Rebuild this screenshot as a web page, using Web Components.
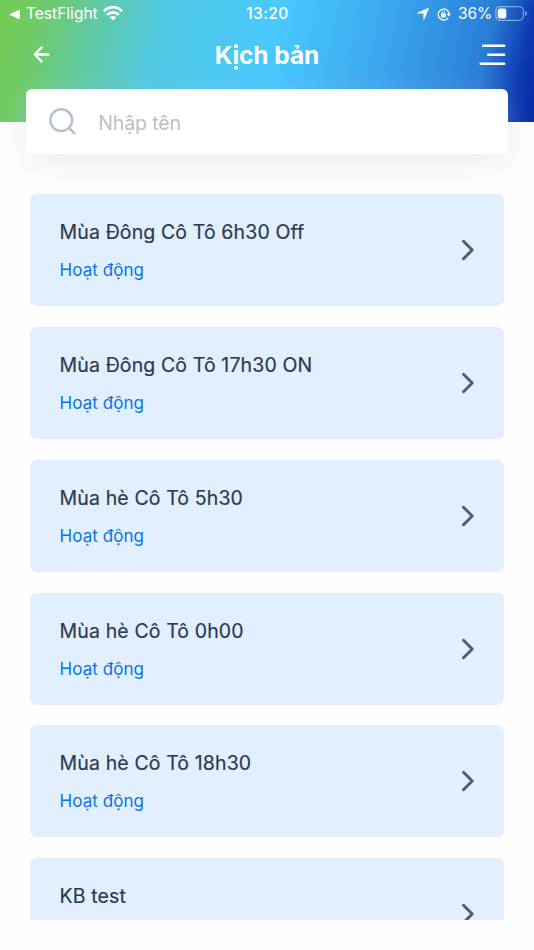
<!DOCTYPE html>
<html lang="vi">
<head>
<meta charset="utf-8">
<title>Kịch bản</title>
<style>
html,body{margin:0;height:100%;background:#fefefe}
body{font-family:Inter,"Liberation Sans",sans-serif;overflow:hidden}
</style>
</head>
<body>
<scenario-app></scenario-app>
<script>
const define = (name, html, setup) => customElements.define(name, class extends HTMLElement {
  constructor() {
    super();
    this.attachShadow({ mode: 'open' }).innerHTML = html;
  }
  connectedCallback() { if (setup) setup(this, this.shadowRoot); }
});

define('status-bar', `
<style>
:host{display:grid;grid-template-columns:1fr auto 1fr;align-items:center;height:28px;padding:0 7px 0 9px;color:#fff;font-size:15.5px;line-height:28px;white-space:nowrap}
div{display:flex;align-items:center}
svg{display:block;flex:none}
.app{margin-left:6px;letter-spacing:.02px}
.wifi{margin-left:5px;margin-top:-2px}
.time{font-weight:500;letter-spacing:.4px;margin-right:1px}
.right{justify-content:flex-end}
.pct{margin-left:7px;letter-spacing:-.15px}
.bat{margin-left:3px;margin-top:-1px}
</style>
<div><svg width="11" height="11" viewBox="0 0 11 11"><path d="M1 5.1 9.8.9q1-.4 1 .6v7.8q0 1-1 .6L1 6Q0 5.5 1 5.1Z" fill="#fff"/></svg>
<span class="app">TestFlight</span>
<svg class="wifi" width="20" height="15" viewBox="0 0 20 15"><g fill="none" stroke="#fff" stroke-width="2.7"><path d="M.9 5.3C6-.1 14-.1 19.1 5.3"/><path d="M4.2 8.8c3.3-3.3 8.3-3.3 11.6 0"/></g><path d="M6.9 11.3q3.1-2.6 6.2 0L10 14.5Z" fill="#fff"/></svg></div>
<div class="time">13:20</div>
<div class="right">
<svg width="12" height="12" viewBox="0 0 12 12"><path d="M11.2.1q.9-.3.6.6L7.2 11.5q-.5.8-.8-.1V5.6H.6q-.9-.3-.1-.8Z" fill="#fff"/></svg>
<svg style="margin-left:8px" width="14" height="13" viewBox="0 0 14 13"><path d="M11.2 9.8A5.5 5.5 0 1 1 11.6 4" fill="none" stroke="#fff" stroke-width="1.3"/><path d="M9.7 5.7h4.1l-2 2.9Z" fill="#fff"/><path d="M11.5 3.8l.4 2.2" stroke="#fff" stroke-width="1.3"/><rect x="4" y="5.6" width="4.8" height="3.8" rx=".5" fill="#fff"/><path d="M5 6V4.6a1.4 1.4 0 0 1 2.8 0V6" fill="none" stroke="#fff" stroke-width=".9"/></svg>
<span class="pct">36%</span>
<svg class="bat" width="32" height="15" viewBox="0 0 32 15"><rect x=".9" y=".7" width="27.4" height="13.6" rx="4" fill="none" stroke="#fff" stroke-opacity=".45" stroke-width="1.3"/><rect x="2.8" y="2.5" width="8.5" height="10" rx="2" fill="#fff"/><path d="M30 5q2 .6 2 2.5t-2 2.5Z" fill="#fff" fill-opacity=".5"/></svg>
</div>`);

define('nav-bar', `
<style>
:host{display:grid;grid-template-columns:1fr auto 1fr;align-items:center;height:54px;padding:0 28px 0 33px;color:#fff}
h1{margin:0 5px 0 0;font-size:24.5px;line-height:54px;font-weight:700;letter-spacing:-.05px}
svg{display:block}
.back{margin-top:-1px}
.menu{justify-self:end}
</style>
<svg class="back" width="17" height="17" viewBox="0 0 17 17" fill="none" stroke="#fff" stroke-width="2.4" stroke-linecap="round" stroke-linejoin="round"><path d="M8.6 1.4 1.8 8.5l6.8 7M2 8.5h13.3"/></svg>
<h1><slot></slot></h1>
<svg class="menu" width="27" height="22" viewBox="0 0 27 22" stroke="#fff" stroke-width="2.6" stroke-linecap="round"><path d="M4.3 1.7h20.8M9.3 10.7h15.8M1.7 19.7h23.4"/></svg>`);

define('search-field', `
<style>
:host{display:flex;align-items:center;box-sizing:border-box;height:64.5px;padding-left:22.5px;border-radius:6px;background:#fff;box-shadow:0 10px 34px rgba(195,203,225,.32);color:#b9c0c9;font-size:19.5px}
svg{display:block;margin-right:21.7px;margin-top:2px}
span{letter-spacing:-.13px;line-height:28px;margin-top:4px}
</style>
<svg width="28" height="28" viewBox="0 0 28 28" fill="none" stroke="#b4c3d4" stroke-width="2.5" stroke-linecap="round"><circle cx="12.2" cy="12.2" r="10.9"/><path d="m20 20 5.4 5.4"/></svg>
<span><slot></slot></span>`);

define('scenario-card', `
<style>
:host{display:flex;align-items:center;justify-content:space-between;box-sizing:border-box;flex:none;height:112px;padding:0 28.7px 0 29.6px;border-radius:7px;background:#e1efff}
.title{color:#2d3b50;font-size:19.5px;line-height:28px;letter-spacing:.12px;-webkit-text-stroke:.2px #2d3b50}
.state{color:#0a74e2;font-size:17px;line-height:24px;height:24px;margin-top:12px;letter-spacing:.06px}
svg{display:block}
</style>
<div><div class="title"><slot></slot></div><div class="state"></div></div>
<svg width="14" height="22" viewBox="0 0 14 22" fill="none" stroke="#505e6e" stroke-width="3" stroke-linecap="round" stroke-linejoin="round"><path d="m2.5 2.3 8.7 8.7-8.7 8.7"/></svg>`,
(el, root) => { root.querySelector('.state').textContent = el.getAttribute('state') || ''; });

define('scenario-app', `
<style>
:host{display:flex;flex-direction:column;height:920px;overflow:hidden}
header{flex:none;height:121.5px;background:linear-gradient(102deg,#74cc52 0%,#70cb68 7%,#62c9a0 17%,#50c9e4 30%,#48c8ff 51%,#3dabf0 68%,#2d87dc 85%,#2a7bd4 89%,#0b39b0 96%,#0428a4 100%)}
search-field{flex:none;margin:-32.3px 26px 0;position:relative}
main{display:flex;flex-direction:column;gap:20.9px;margin-top:40.2px;padding:0 30px;flex:1;min-height:0;overflow:hidden}
</style>
<header><status-bar></status-bar><nav-bar>Kịch bản</nav-bar></header>
<search-field>Nhập tên</search-field>
<main>
<scenario-card state="Hoạt động">Mùa Đông Cô Tô 6h30 Off</scenario-card>
<scenario-card state="Hoạt động">Mùa Đông Cô Tô 17h30 ON</scenario-card>
<scenario-card state="Hoạt động">Mùa hè Cô Tô 5h30</scenario-card>
<scenario-card state="Hoạt động">Mùa hè Cô Tô 0h00</scenario-card>
<scenario-card state="Hoạt động">Mùa hè Cô Tô 18h30</scenario-card>
<scenario-card>KB test</scenario-card>
</main>`);
</script>
</body>
</html>
